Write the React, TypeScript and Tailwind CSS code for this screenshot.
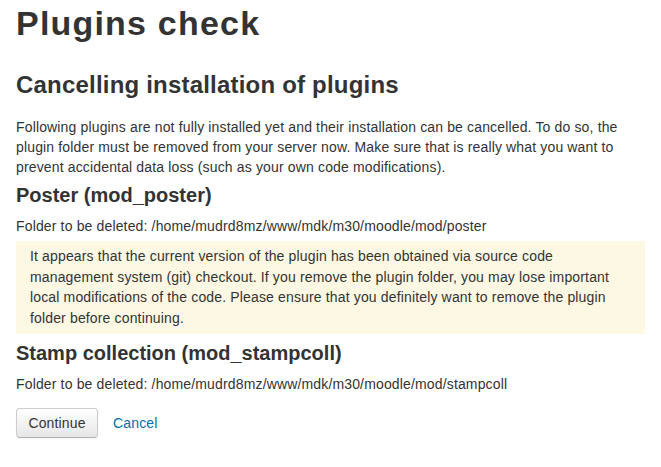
const App = () => {
	return (
		<div className="min-h-[467px] bg-white px-4 text-[14px] leading-5 tracking-[0.15px] text-[#333333]" style={{ fontFamily: '"Liberation Sans", Arial, Helvetica, sans-serif' }}>
			<h1 className="pt-[3px] text-[34px] font-bold leading-10 tracking-[1.2px]">Plugins check</h1>
			<h2 className="mt-[22px] text-[24px] font-bold leading-10 tracking-[0.2px]">Cancelling installation of plugins</h2>
			<p className="mt-[12px]">
				Following plugins are not fully installed yet and their installation can be cancelled. To do so, the plugin folder must be removed from your server now. Make sure that is really what you want to prevent accidental data loss (such as your own code modifications).
			</p>
			<h3 className="mt-[8px] text-[20px] font-bold leading-5 tracking-normal">Poster (mod_poster)</h3>
			<p className="mt-[11px]">Folder to be deleted: /home/mudrd8mz/www/mdk/m30/moodle/mod/poster</p>
			<div className="mt-[5px] bg-[#fcf8e3] pt-[5px] pr-[14px] pb-[6px] pl-[14px] leading-[20.5px] text-[#333333]">
				It appears that the current version of the plugin has been obtained via source code management system (git) checkout. If you remove the plugin folder, you may lose important local modifications of the code. Please ensure that you definitely want to remove the plugin folder before continuing.
			</div>
			<h3 className="mt-[9px] text-[20px] font-bold leading-5 tracking-normal">Stamp collection (mod_stampcoll)</h3>
			<p className="mt-[11px]">Folder to be deleted: /home/mudrd8mz/www/mdk/m30/moodle/mod/stampcoll</p>
			<div className="mt-[14px] flex items-center gap-[15px]">
				<button className="h-[30px] w-[82px] rounded-[4px] border border-[#cccccc] border-b-[#b3b3b3] bg-gradient-to-b from-white to-[#e6e6e6] text-[14px] text-[#333333] shadow-[inset_0_1px_0_rgba(255,255,255,0.2),0_1px_2px_rgba(0,0,0,0.05)]">
					Continue
				</button>
				<a href="#" className="text-[#0070a8]">Cancel</a>
			</div>
		</div>
	);
};

export default App;
